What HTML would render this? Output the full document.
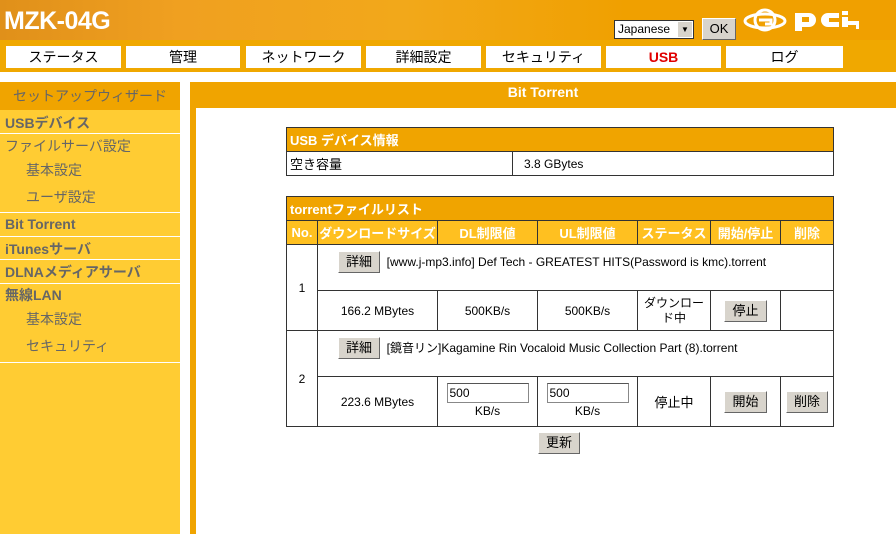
<!DOCTYPE html>
<html><head><meta charset="utf-8"><style>
*{margin:0;padding:0;box-sizing:border-box}
body{width:896px;height:534px;overflow:hidden;background:#fff;font-family:"Liberation Sans","Noto Sans CJK JP",sans-serif;position:relative}
.a{position:absolute}
#hdr{left:0;top:0;width:896px;height:40px;background:linear-gradient(90deg,#e0901a 0%,#f0a020 20%,#f2a81a 45%,#f0a000 70%,#f0a000 100%)}
#nav{left:0;top:40px;width:896px;height:32px;background:#f0a800}
.tab{position:absolute;top:46px;height:22px;background:#fff;font-size:14px;text-align:center;line-height:22px;color:#000}
.side{left:0;top:82px;width:180px;height:452px;background:#ffcc33}
.si{position:absolute;left:5px;font-size:14px;font-weight:bold;color:#666}
.si2{position:absolute;left:26px;font-size:14px;color:#666}
.ln{position:absolute;left:0;width:180px;height:1px;background:#fff}
table{border-collapse:collapse;position:absolute;font-size:12px}
td{border:1px solid #333;}
.btn{display:inline-block;background:#d8d4cc;border:1px solid #fff;border-right-color:#666;border-bottom-color:#666;font-size:13px;padding:2px 7px;line-height:16px}
.inp{display:inline-block;width:82px;height:20px;border:1px solid #888;border-top-color:#555;font-size:12px;text-align:left;padding:1px 2px;background:#fff}
</style></head><body>
<div id="hdr" class="a"></div>
<div class="a" style="left:4px;top:7px;font-size:25px;font-weight:bold;color:#fff;letter-spacing:-0.5px">MZK-04G</div>
<div class="a" style="left:614px;top:20px;width:80px;height:19px;background:#fff;border:1px solid #333;font-size:12px;line-height:17px;padding-left:3px">Japanese<span style="position:absolute;right:1px;top:1px;width:14px;height:15px;background:#d8d4cc;font-size:8px;text-align:center;line-height:15px">▼</span></div>
<div class="a" style="left:702px;top:18px;width:34px;height:22px;background:#d8d4cc;border:1px solid #fff;border-right-color:#666;border-bottom-color:#666;font-size:13px;text-align:center;line-height:20px">OK</div>
<svg class="a" style="left:743px;top:6px" width="150" height="32" viewBox="0 0 150 32"><ellipse cx="22" cy="15" rx="20" ry="7" fill="none" stroke="#fff" stroke-width="3"/><circle cx="22" cy="14" r="10" fill="none" stroke="#fff" stroke-width="3"/><path d="M16 14h12v4h-6" stroke="#fff" stroke-width="3" fill="none"/><path d="M52 7h14a7 7 0 0 1 0 14h-7v4h-7z" fill="#fff"/><rect x="59" y="11" width="7" height="5" fill="#f0a000"/><path d="M96 7h-11a7 7 0 0 0 0 14h11v-5h-10v-4h10z" fill="#fff"/><rect x="99" y="11" width="6" height="10" fill="#fff"/><rect x="99" y="5" width="6" height="4" fill="#fff"/><rect x="105" y="15" width="11" height="4" fill="#fff"/><rect x="113" y="15" width="3" height="8" fill="#fff"/></svg>
<div id="nav" class="a"></div>
<div class="tab" style="left:6px;width:115px">ステータス</div>
<div class="tab" style="left:126px;width:114px">管理</div>
<div class="tab" style="left:246px;width:115px">ネットワーク</div>
<div class="tab" style="left:366px;width:115px">詳細設定</div>
<div class="tab" style="left:486px;width:115px">セキュリティ</div>
<div class="tab" style="left:606px;width:115px;color:#e00000;font-weight:bold">USB</div>
<div class="tab" style="left:726px;width:117px">ログ</div>

<div class="a side"></div>
<div class="a" style="left:0;top:82px;width:180px;height:28px;background:#f0a400;color:#666;font-size:14px;text-align:center;line-height:28px">セットアップウィザード</div>
<div class="si" style="top:113px">USBデバイス</div>
<div class="ln" style="top:133px"></div>
<div class="si" style="top:136px;font-weight:normal">ファイルサーバ設定</div>
<div class="si2" style="top:160px">基本設定</div>
<div class="si2" style="top:187px">ユーザ設定</div>
<div class="ln" style="top:212px"></div>
<div class="si" style="top:216px">Bit Torrent</div>
<div class="ln" style="top:236px"></div>
<div class="si" style="top:239px">iTunesサーバ</div>
<div class="ln" style="top:259px"></div>
<div class="si" style="top:262px">DLNAメディアサーバ</div>
<div class="ln" style="top:283px"></div>
<div class="si" style="top:285px">無線LAN</div>
<div class="si2" style="top:309px">基本設定</div>
<div class="si2" style="top:336px">セキュリティ</div>
<div class="ln" style="top:362px"></div>

<div class="a" style="left:190px;top:82px;width:706px;height:452px;background:#f0a400"></div>
<div class="a" style="left:196px;top:108px;width:700px;height:426px;background:#fff"></div>
<div class="a" style="left:190px;top:84px;width:706px;font-size:14px;font-weight:bold;color:#fff;text-align:center">Bit Torrent</div>

<table style="left:286px;top:127px;width:548px">
<tr style="height:24px;background:#f0a400;color:#fff;font-weight:bold;font-size:13px"><td colspan="2" style="padding-left:3px">USB デバイス情報</td></tr>
<tr style="height:24px"><td style="width:226px;padding-left:3px;font-size:13px">空き容量</td><td style="padding-left:11px">3.8 GBytes</td></tr>
</table>

<table style="left:286px;top:196px;width:548px;text-align:center">
<tr style="height:24px;background:#f0a400;color:#fff;font-weight:bold;font-size:13px"><td colspan="7" style="text-align:left;padding-left:3px">torrentファイルリスト</td></tr>
<tr style="height:24px;background:#ffc020;color:#fff;font-weight:bold;font-size:13px"><td style="width:31px">No.</td><td style="width:120px">ダウンロードサイズ</td><td style="width:100px">DL制限値</td><td style="width:100px">UL制限値</td><td style="width:73px">ステータス</td><td style="width:70px">開始/停止</td><td>削除</td></tr>
<tr style="height:46px"><td rowspan="2">1</td><td colspan="6" style="text-align:left;padding-left:20px;vertical-align:top;padding-top:6px"><span class="btn">詳細</span>&nbsp; [www.j-mp3.info] Def Tech - GREATEST HITS(Password is kmc).torrent</td></tr>
<tr style="height:40px"><td>166.2 MBytes</td><td>500KB/s</td><td>500KB/s</td><td style="line-height:15px">ダウンロー<br>ド中</td><td><span class="btn">停止</span></td><td></td></tr>
<tr style="height:46px"><td rowspan="2">2</td><td colspan="6" style="text-align:left;padding-left:20px;vertical-align:top;padding-top:6px"><span class="btn">詳細</span>&nbsp; [鏡音リン]Kagamine Rin Vocaloid Music Collection Part (8).torrent</td></tr>
<tr style="height:50px"><td>223.6 MBytes</td><td style="line-height:17px"><span class="inp">500</span><br>KB/s</td><td style="line-height:17px"><span class="inp">500</span><br>KB/s</td><td style="font-size:13px">停止中</td><td><span class="btn">開始</span></td><td><span class="btn">削除</span></td></tr>
</table>
<div class="a btn" style="left:538px;top:432px">更新</div>
</body></html>
